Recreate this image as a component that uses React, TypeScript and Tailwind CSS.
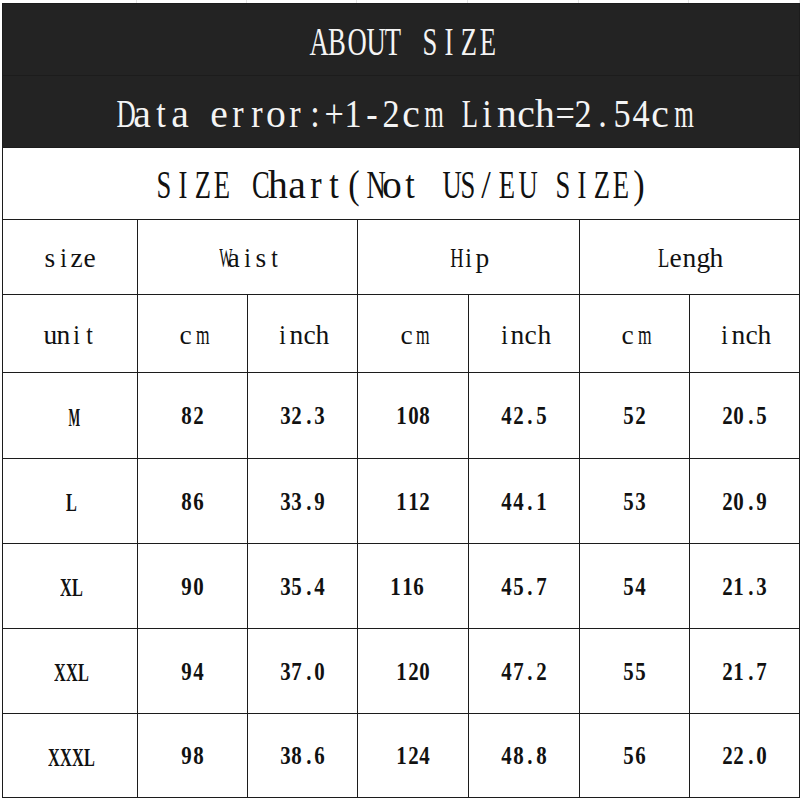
import type { ReactNode } from "react";

const sizes = [
  { size: "M", w: ["82", "32.3"], h: ["108", "42.5"], l: ["52", "20.5"] },
  { size: "L", w: ["86", "33.9"], h: ["112", "44.1"], l: ["53", "20.9"] },
  { size: "XL", w: ["90", "35.4"], h: ["116", "45.7"], l: ["54", "21.3"] },
  { size: "XXL", w: ["94", "37.0"], h: ["120", "47.2"], l: ["55", "21.7"] },
  { size: "XXXL", w: ["98", "38.6"], h: ["124", "48.8"], l: ["56", "22.0"] },
];

// half-width serif look: wide glyphs get squeezed, round lowercase widened a bit
const squeeze = (c: string) => {
  if ("MW".includes(c)) return "scale-x-[0.56]";
  if ("mw".includes(c)) return "scale-x-[0.7]";
  if (/[A-Z]/.test(c)) return "scale-x-[0.74]";
  if ("acesznghuopxykdbqv".includes(c)) return "scale-x-[1.1]";
  return "scale-x-[0.95]";
};

const Mono = ({ text, pitch }: { text: string; pitch: string }) => (
  <span className="inline-flex whitespace-pre">
    {text.split("").map((c, i) => (
      <span key={i} className={`inline-block text-center ${pitch}`}>
        <span className={`inline-block scale-y-[1.1] ${squeeze(c)}`}>
          {c === " " ? "\u00a0" : c}
        </span>
      </span>
    ))}
  </span>
);

const Cell = ({
  children,
  className = "",
}: {
  children: ReactNode;
  className?: string;
}) => (
  <div className={`flex items-center justify-center bg-white text-[#111] ${className}`}>
    {children}
  </div>
);

const App = () => {
  return (
    <div className="w-[800px] h-[800px] bg-white overflow-hidden font-['Liberation_Serif','Times_New_Roman',serif]">
      {/* faint spreadsheet grid above the chart */}
      <div className="h-[3px] grid grid-cols-[137px_110px_110px_111px_111px_110px_1fr]">
        {Array.from({ length: 7 }).map((_, i) => (
          <div key={i} className="border-r border-[#e4e4e4]" />
        ))}
      </div>

      <div className="ml-[2px] w-[798px] h-[795px] grid grid-cols-[134px_109px_109px_110px_110px_109px_109px] grid-rows-[71px_71px_71px_74px_77px_85px_84px_84px_84px_83px] gap-px p-px bg-[#1c1c1c]">
        <div className="col-span-7 flex items-center justify-center bg-[#232323] text-[#f4f4f4] text-[36px] pt-[4px]">
          <Mono text="ABOUT SIZE" pitch="w-[19px]" />
        </div>
        <div className="col-span-7 flex items-center justify-center bg-[#232323] text-[#f4f4f4] text-[36px] pt-[4px]">
          <Mono text="Data error:+1-2cm Linch=2.54cm" pitch="w-[19.2px]" />
        </div>
        <Cell className="col-span-7 text-[36px] pt-[3px]">
          <Mono text="SIZE Chart(Not US/EU SIZE)" pitch="w-[19px]" />
        </Cell>

        <Cell className="text-[25px] pt-[2px]">
          <Mono text="size" pitch="w-[13.3px]" />
        </Cell>
        {["Waist", "Hip", "Lengh"].map((h) => (
          <Cell key={h} className="col-span-2 text-[25px] pt-[1px]">
            <Mono text={h} pitch="w-[13.5px]" />
          </Cell>
        ))}

        <Cell className="text-[25px] pt-[3px]">
          <Mono text="unit" pitch="w-[13.3px]" />
        </Cell>
        {["cm", "inch", "cm", "inch", "cm", "inch"].map((u, i) => (
          <Cell key={i} className="text-[25px] pt-[3px]">
            <Mono text={u} pitch="w-[13.3px]" />
          </Cell>
        ))}

        {sizes.map((row) => (
          <div key={row.size} className="contents text-[22px] font-bold">
            <Cell className="pt-[3px]">
              <Mono text={row.size} pitch="w-[12px]" />
            </Cell>
            {[...row.w, ...row.h, ...row.l].map((v, i) => (
              <Cell key={i} className={row.size === "XL" && i === 2 ? "pr-[12px]" : ""}>
                <Mono text={v} pitch="w-[11.5px]" />
              </Cell>
            ))}
          </div>
        ))}
      </div>
    </div>
  );
};

export default App;
